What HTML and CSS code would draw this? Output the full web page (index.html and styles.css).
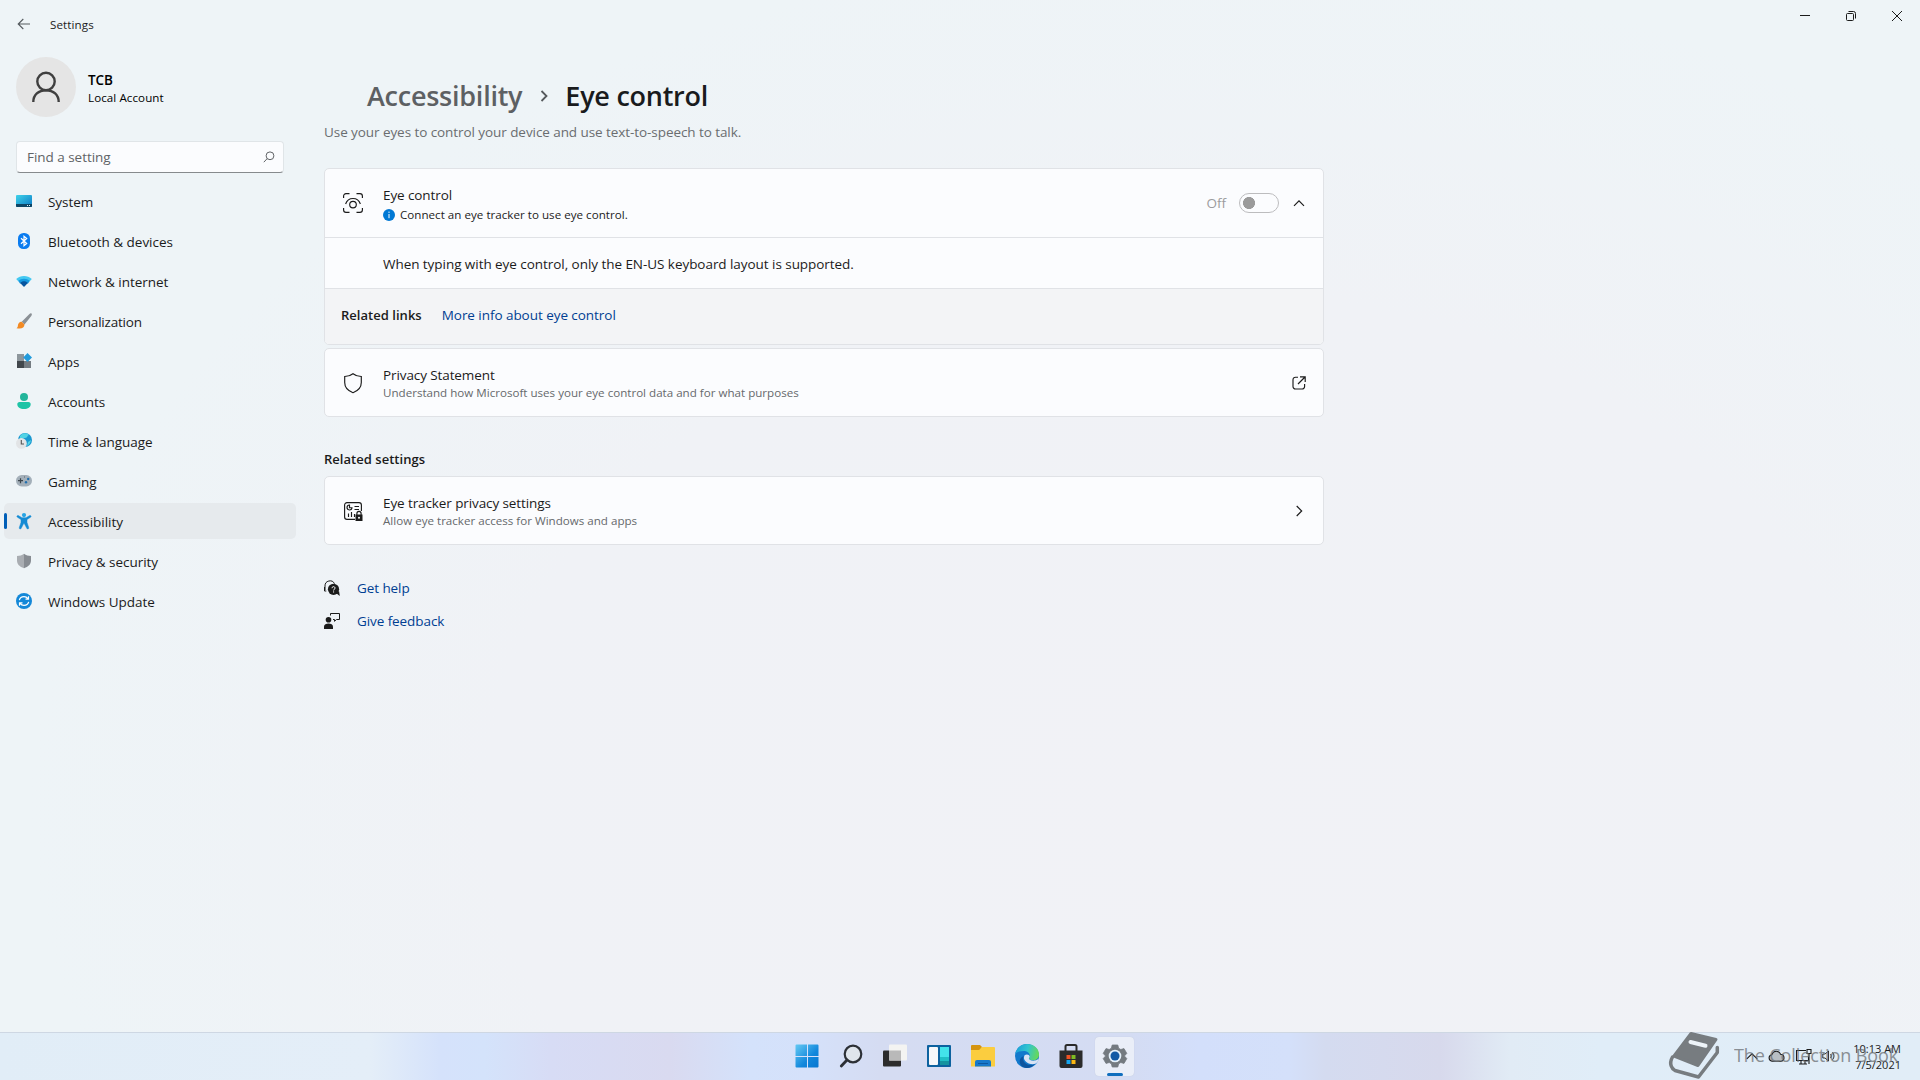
FILE: index.html
```html
<!DOCTYPE html>
<html lang="en">
<head>
<meta charset="utf-8">
<title>Settings</title>
<link rel="stylesheet" href="styles.css">
</head>
<body>
<div class="window">
  <header class="titlebar">
    <svg class="back" width="14" height="12" viewBox="0 0 14 12"><path d="M6.3 1 1.2 6l5.1 5M1.5 6H13"/></svg>
    <span class="app-name">Settings</span>
    <div class="controls">
      <svg width="12" height="12" viewBox="0 0 12 12"><path d="M1 5.5h10"/></svg>
      <svg width="12" height="12" viewBox="0 0 12 12"><rect x="1.5" y="3.5" width="7" height="7" rx="1"/><path d="M3.5 1.5h5a2 2 0 0 1 2 2v5"/></svg>
      <svg width="12" height="12" viewBox="0 0 12 12"><path d="m1 1 10 10M11 1 1 11"/></svg>
    </div>
  </header>

  <div class="columns">
    <aside class="sidebar">
      <div class="account">
        <div class="avatar"><svg width="30" height="32" viewBox="0 0 30 32"><circle cx="15" cy="10.5" r="8.7"/><path d="M2.3 31c0-7 5.2-11.8 12.7-11.8S27.700 24 27.700 31"/></svg></div>
        <div class="who"><span class="user">TCB</span><span class="kind">Local Account</span></div>
      </div>
      <div class="search">
        <span>Find a setting</span>
        <svg width="12" height="12" viewBox="0 0 12 12"><circle cx="7" cy="4.800" r="3.900"/><path d="M4.200 7.600.8 11.200"/></svg>
      </div>
      <nav class="nav">
        <a class="item"><svg width="16" height="16" viewBox="0 0 16 16"><defs><linearGradient id="sys" x1="0" y1="0" x2="1" y2="1"><stop offset="0" stop-color="#3fd3ea"/><stop offset="1" stop-color="#0a78c4"/></linearGradient></defs><rect y="2" width="16" height="12" rx="1" fill="url(#sys)"/><path d="M0 11h16v2a1 1 0 0 1-1 1H1a1 1 0 0 1-1-1z" fill="#0d4565"/><path d="M11 12.500h1m1 0h1" stroke="#d9f4fb"/></svg><span>System</span></a>
        <a class="item"><svg width="16" height="16" viewBox="0 0 16 16"><rect x="2" width="12" height="16" rx="5.500" fill="#0a7cf0"/><path d="m5 5.200 5.700 5.300L8 12.800V3.200l2.700 2.300L5 10.800" fill="none" stroke="#fff" stroke-width="1.200"/></svg><span>Bluetooth &amp; devices</span></a>
        <a class="item"><svg width="16" height="16" viewBox="0 0 16 16"><path d="M.2 6.100C4.300 2 11.700 2 15.800 6.100L14 8H2z" fill="#43c8f1"/><path d="M2.200 8c3-3.100 8.600-3.100 11.600 0L12 10.500H4z" fill="#1699e0"/><path d="M4.200 10c2-2.300 5.600-2.300 7.600 0L8.500 13.600a.7.7 0 0 1-1 0z" fill="#07559f"/></svg><span>Network &amp; internet</span></a>
        <a class="item tight"><svg width="16" height="16" viewBox="0 0 16 16"><path d="M15.500.5c.8.8.3 1.900-.4 2.800L8.500 11.500 5.700 8.800l7.500-7.500c.8-.8 1.600-1.400 2.300-.8z" fill="#8b9196"/><path d="M5.700 8.800 8.500 11.500c-.2 3.300-2.800 4.700-8 3.700 2-1.100.9-3.300 2.200-5 .8-1 2-1.400 3-1.400z" fill="#f28a24"/></svg><span>Personalization</span></a>
        <a class="item"><svg width="16" height="16" viewBox="0 0 16 16"><path d="M1 1h7v7H1z" fill="#8d969c"/><path d="M1 8h7v7H1z" fill="#41474c"/><path d="M8 8h7v7H8z" fill="#747c82"/><path d="m11.500 0 4.500 4.500L11.500 9 7.200 4.500z" fill="#229bdc"/></svg><span>Apps</span></a>
        <a class="item"><svg width="16" height="16" viewBox="0 0 16 16"><circle cx="8" cy="4" r="4" fill="#22b59b"/><path d="M1.300 11.200C1.300 10 2.200 9 3.500 9h9c1.300 0 2.200 1 2.200 2.200 0 3-2.700 4.800-6.700 4.800s-6.700-1.800-6.700-4.800z" fill="#1ec4a6"/></svg><span>Accounts</span></a>
        <a class="item"><svg width="16" height="16" viewBox="0 0 16 16"><circle cx="9" cy="7" r="7" fill="#1998d0"/><path d="M4 3c3-4 7-3 9-1-2 0-1 3-4 3S6 7 4 6zM12 9l3-2c-.3 3-2 5-4 6z" fill="#52d3e4"/><circle cx="5.400" cy="10.400" r="5.400" fill="#e2e4e6"/><path d="M5.300 7v4H8" fill="none" stroke="#555" stroke-width="1.100"/></svg><span>Time &amp; language</span></a>
        <a class="item"><svg width="16" height="16" viewBox="0 0 16 16"><rect y="2" width="16" height="11.500" rx="5.700" fill="#a3afb9"/><path d="M2 7.700h5M4.500 5.200v5" stroke="#3b454d" stroke-width="1.200"/><circle cx="12.200" cy="6" r="1.200" fill="#216fae"/><circle cx="10" cy="9.200" r="1.200" fill="#216fae"/><path d="M8 4h1" stroke="#54616b"/></svg><span>Gaming</span></a>
        <a class="item active"><svg width="16" height="16" viewBox="0 0 16 16"><circle cx="8" cy="2.100" r="2.100" fill="#27a4e4"/><path d="M2.300 2.600 6 4.700h4l3.700-2.100a.9.9 0 0 1 .9 1.600L11 6.600v2.800l1.700 5.200a1 1 0 0 1-1.900.7L8.300 10.500h-.6l-2.500 4.800a1 1 0 0 1-1.900-.7L5 9.400V6.600L1.400 4.200a.9.9 0 0 1 .9-1.600z" fill="#158bd4" stroke="#158bd4" stroke-width=".5"/></svg><span>Accessibility</span></a>
        <a class="item"><svg width="16" height="16" viewBox="0 0 16 16"><path d="M8 .8c2 1.500 4.300 2.100 7 2.200v4.500c0 3.700-2.600 6.200-7 7.700z" fill="#878c92"/><path d="M8 .8C6 2.300 3.700 2.900 1 3v4.500c0 3.700 2.600 6.200 7 7.700z" fill="#a9adb2"/></svg><span>Privacy &amp; security</span></a>
        <a class="item"><svg width="16" height="16" viewBox="0 0 16 16"><circle cx="8" cy="8" r="8" fill="#1488d8"/><path d="M3.300 7.200C3.900 4.900 5.700 3.700 8 3.700c1.700 0 3 .7 4 2M12.500 3.200v3h-3M12.700 8.800c-.6 2.300-2.400 3.500-4.700 3.500-1.700 0-3-.7-4-2M3.500 12.800v-3h3" fill="none" stroke="#fff" stroke-width="1.200"/></svg><span>Windows Update</span></a>
      </nav>
    </aside>

    <main class="content">
      <h1 class="crumbs"><span class="parent">Accessibility</span><svg width="8" height="12" viewBox="0 0 8 12"><path d="m1.500 1 5 5-5 5"/></svg><span>Eye control</span></h1>
      <p class="lead">Use your eyes to control your device and use text-to-speech to talk.</p>

      <section class="card expander">
        <div class="row head">
          <svg class="glyph" width="20" height="20" viewBox="0 0 20 20"><path d="M.6 5V3A2.400 2.400 0 0 1 3 .6h3.500M13.500.6H17A2.400 2.400 0 0 1 19.400 3v2M19.400 15v2a2.400 2.400 0 0 1-2.400 2.400h-3.500M6.500 19.400H3A2.400 2.400 0 0 1 .6 17v-2"/><path d="M2.600 11C4 7 7 5.500 10 5.500s6 1.500 7.400 5.500"/><circle cx="10" cy="11.600" r="3.300"/></svg>
          <div class="text"><span class="name">Eye control</span><span class="note"><svg width="12" height="12" viewBox="0 0 12 12"><circle cx="6" cy="6" r="6" fill="#0078d4"/><path d="M6 5v4.200M6 2.600v1.300" stroke="#fff"/></svg>Connect an eye tracker to use eye control.</span></div>
          <span class="state">Off</span><span class="toggle"></span>
          <svg class="tail" width="12" height="12" viewBox="0 0 12 12"><path d="m1 8.800 5-5 5 5"/></svg>
        </div>
        <div class="row info">When typing with eye control, only the EN-US keyboard layout is supported.</div>
        <div class="row links"><strong>Related links</strong><a>More info about eye control</a></div>
      </section>

      <section class="card row">
        <svg class="glyph" width="20" height="20" viewBox="0 0 20 20"><path d="M10 .7c2.300 1.800 5 2.700 8.300 2.800v6c0 5-3 8.200-8.300 10.200C4.700 17.700 1.700 14.500 1.700 9.500v-6C5 3.400 7.700 2.500 10 .7z"/></svg>
        <div class="text"><span class="name">Privacy Statement</span><span class="desc">Understand how Microsoft uses your eye control data and for what purposes</span></div>
        <svg class="tail" width="14" height="14" viewBox="0 0 14 14"><path d="M6 1.200H3.500A2.500 2.500 0 0 0 1 3.700v6.800A2.500 2.500 0 0 0 3.500 13h6.600a2.500 2.500 0 0 0 2.500-2.500V8M8 .8h5.200V6M13 1 6 8"/></svg>
      </section>

      <h2 class="heading">Related settings</h2>
      <section class="card row">
        <svg class="glyph" width="20" height="20" viewBox="0 0 20 20"><path d="M12 18.400H4A2.400 2.400 0 0 1 1.600 16V4A2.400 2.400 0 0 1 4 1.600h12A2.400 2.400 0 0 1 18.400 4v6M11.500 5.500h4.500M11.500 8.500h4.500M5.500 12.500v3.500M8.500 11v5M11.500 13v3"/><path d="M6.500 4A2.500 2.500 0 1 0 9 6.700H6.500z"/><path d="M12.500 13.500h7V20h-7z" fill="#1b1b1b" stroke="none"/><path d="M13.900 14v-1.500a2.100 2.100 0 0 1 4.200 0V14"/><circle cx="16" cy="16.800" r="1" fill="#fff" stroke="none"/></svg>
        <div class="text"><span class="name">Eye tracker privacy settings</span><span class="desc">Allow eye tracker access for Windows and apps</span></div>
        <svg class="tail" width="12" height="12" viewBox="0 0 12 12"><path d="m2.700 1 5 5-5 5"/></svg>
      </section>

      <div class="support">
        <a><svg width="16" height="16" viewBox="0 0 16 16"><path d="M1 10V6a5 5 0 0 1 9.500-2.300M.5 7v4h1.800" fill="none" stroke="#1b1b1b"/><circle cx="9.500" cy="9.300" r="5.600" fill="#1b1b1b"/><path d="m12 13 3.800 3-.8-5z" fill="#1b1b1b"/><path d="M8 8.200c0-2.200 3.200-2 3 0-.1 1-1.400 1.100-1.400 2.300m0 .9v1.100" fill="none" stroke="#fff"/></svg>Get help</a>
        <a><svg width="16" height="16" viewBox="0 0 16 16"><circle cx="4.500" cy="6.800" r="2.800" fill="#1b1b1b"/><path d="M0 16v-2.500c0-4 9-4 9 0V16z" fill="#1b1b1b"/><path d="M6.500 2.500v-2h9v6h-3L10.500 8.300V6.500H9" fill="none" stroke="#1b1b1b"/></svg>Give feedback</a>
      </div>
    </main>
  </div>

  <footer class="taskbar">
    <div class="apps">
      <span class="app"><svg width="24" height="24" viewBox="0 0 24 24"><defs><linearGradient id="win" x1="0" y1="0" x2="1" y2="1"><stop offset="0" stop-color="#64c9f3"/><stop offset=".6" stop-color="#1187dc"/><stop offset="1" stop-color="#0876d0"/></linearGradient></defs><path d="M1.500.5H12V12H.5V1.500a1 1 0 0 1 1-1zM13 .5h9.500a1 1 0 0 1 1 1V12H13zM.5 13H12v10.500H1.500a1 1 0 0 1-1-1zM13 13h10.500v9.500a1 1 0 0 1-1 1H13z" fill="url(#win)"/></svg></span>
      <span class="app"><svg width="24" height="24" viewBox="0 0 24 24"><circle cx="14" cy="10" r="8.300" fill="#dfe5ec" stroke="#2c3036" stroke-width="2.200"/><path d="m8 16-5.700 6" stroke="#2c3036" stroke-width="2.800" stroke-linecap="round"/></svg></span>
      <span class="app"><svg width="24" height="24" viewBox="0 0 24 24"><rect y="6.500" width="18" height="16" rx="1" fill="#2c2c2c"/><rect x="6" y=".5" width="18" height="16" rx="1" fill="#f4f4f2"/><path d="M6 6.500h12v10H6z" fill="#b9b9b9"/></svg></span>
      <span class="app"><svg width="24" height="24" viewBox="0 0 24 24"><rect y="1" width="24" height="22" rx="1" fill="#0d629f"/><rect x="2" y="3" width="9" height="18" rx="1" fill="#f6f8fa"/><path d="M13 3h9v10h-9z" fill="#43e3ea"/><path d="M13 13h9v4h-9z" fill="#20bfc5"/><path d="M13 17h9v4h-9z" fill="#15939f"/></svg></span>
      <span class="app"><svg width="24" height="24" viewBox="0 0 24 24"><path d="M0 2a1 1 0 0 1 1-1h8l2 2-2 4H0z" fill="#d59410"/><path d="M0 6h8l3-3h12a1 1 0 0 1 1 1v18.500H0z" fill="#fbcd3f"/><path d="M4 22.500V18a2 2 0 0 1 2-2h12a2 2 0 0 1 2 2v4.500z" fill="#1679cb"/><path d="M7 19h10v1H7z" fill="#0c58a0"/></svg></span>
      <span class="app"><svg width="24" height="24" viewBox="0 0 24 24"><defs><linearGradient id="edge" x1="0" y1=".3" x2="1" y2=".5"><stop offset="0" stop-color="#1a9fd9"/><stop offset=".5" stop-color="#31c5cf"/><stop offset="1" stop-color="#68d957"/></linearGradient></defs><circle cx="12" cy="12" r="12" fill="#1279cc"/><path d="M.3 10C1.500 3.700 6.300 0 12 0c6.800 0 12 4.800 12 10.300 0 4-2.700 6-6 6-2.600 0-4-1-4-2 0-.7.800-1.100.8-2.600C14.800 9 12 7 8.500 7 4.800 7 2 8 .3 10z" fill="url(#edge)"/><path d="M8.500 12c-2 6 3.500 11 11.500 8-3 3.300-6.500 4.500-10 3.700C4 22.300 2.500 14.500 8.500 12z" fill="#0d559f"/><path d="M9.600 11.200c1.500-1.400 5-1 5.100 1.200 0 1-.8 1.300-.8 2 0 1.300 2.600 2.700 6 2.200 1.600-.2 2.900-1.100 3.600-2 .300 2-1 4.300-3.100 5.200-6.600 1.700-13.800-3.500-10.800-8.600z" fill="#d9e3f4"/></svg></span>
      <span class="app"><svg width="24" height="24" viewBox="0 0 24 24"><path d="M6.500 7V2.500a1.500 1.500 0 0 1 1.500-1.500h8a1.500 1.500 0 0 1 1.500 1.500V7" fill="none" stroke="#292929" stroke-width="2"/><path d="M.5 6.500h23V22a2 2 0 0 1-2 2h-19a2 2 0 0 1-2-2z" fill="#2b2b2b"/><path d="M7.500 11h4v4h-4z" fill="#f05223"/><path d="M12.500 11h4v4h-4z" fill="#7fbb22"/><path d="M7.500 16h4v4h-4z" fill="#16a4ec"/><path d="M12.500 16h4v4h-4z" fill="#fcb914"/></svg></span>
      <span class="app open"><svg width="24" height="24" viewBox="0 0 24 24"><path d="M9.200 1h5.600l.8 3.200 2.200 1.300L21 4.600l2.800 4.800-2.400 2.600 2.400 2.600-2.800 4.800-3.200-.9-2.200 1.300-.8 3.200H9.200l-.8-3.200-2.200-1.300-3.200.9L.2 14.600 2.600 12 .2 9.400 3 4.600l3.200.9 2.200-1.300z" fill="#747a80" stroke="#747a80" stroke-linejoin="round" stroke-width=".8"/><circle cx="12" cy="12" r="6.300" fill="#e5f1fb"/><circle cx="12" cy="12" r="4.500" fill="#1159a5"/></svg></span>
    </div>
    <div class="tray">
      <svg width="12" height="8" viewBox="0 0 12 8"><path d="m.8 6.800 5.200-5 5.200 5"/></svg>
      <svg width="17" height="12" viewBox="0 0 17 12"><path d="M4 11.200a3.300 3.300 0 0 1-.3-6.500C5.500.2 11 .2 12.500 4.200c4.500.2 4.700 7 .3 7z" fill="#b8bec3"/></svg>
      <svg width="17" height="17" viewBox="0 0 17 17"><path d="M11 2.500H1.500v10h12V8M4 16h8M6 12.500V16M10 12.500V16M12 1.500h4v4h-4zM14 5.500V16"/></svg>
      <svg class="thin" width="14" height="12" viewBox="0 0 14 12"><path d="M.8 4v4H3l3.500 3V1L3 4zM8.500 4c1 1.200 1 2.800 0 4M10.500 2.200c2 2.400 2 5.200 0 7.600"/></svg>
      <div class="clock"><span>10:13 AM</span><span>7/5/2021</span></div>
    </div>
    <div class="watermark">
      <svg width="51" height="48" viewBox="0 0 51 48"><path d="M22 1.500 47 7.500 29 33.500 5 24z" fill="#777c80" stroke="#777c80" stroke-width="3" stroke-linejoin="round"/><path d="m21.500 10 15 3.700" stroke="#edf3f8" stroke-width="4" stroke-linecap="round"/><path d="M3.500 25C-.500 32 3 37 6 38.500L29.500 45 48.300 20.500v-5" fill="none" stroke="#777c80" stroke-width="3.500" stroke-linejoin="round" stroke-linecap="round"/></svg>
      <span>The Collection Book</span>
    </div>
  </footer>
</div>
</body>
</html>
```
FILE: styles.css
```css
* { box-sizing: border-box; }

body {
  margin: 0;
  font: 13.5px/20px "Open Sans", "Noto Sans", sans-serif;
  letter-spacing: -0.03px;
  color: #1b1b1b;
}

svg { display: block; flex: none; overflow: visible; }

.window {
  display: flex;
  flex-direction: column;
  width: 1920px;
  height: 1080px;
  overflow: hidden;
  background: radial-gradient(ellipse 1150px 850px at 1180px 800px, #f1f2f6 0%, #f0f2f6 60%, #eef4f7 100%);
}

.titlebar { display: flex; height: 48px; padding-left: 17px; }
.back { margin-top: 18px; fill: none; stroke: #555a5e; stroke-width: 1.1; }
.app-name { margin: 15px 0 0 19px; font-size: 11.6px; letter-spacing: 0.1px; }
.controls { display: flex; gap: 34px; margin: 10px 17px 0 auto; fill: none; stroke: #1b1b1b; }

.columns { display: flex; flex: 1; }

.sidebar { width: 300px; padding: 9px 4px 0; }
.account { display: flex; align-items: center; gap: 12px; padding-left: 12px; color: #000; }
.avatar { display: flex; align-items: center; justify-content: center; width: 60px; height: 60px; border-radius: 50%; background: #e5e5e5; }
.avatar svg { fill: none; stroke: #3f3f3f; stroke-width: 2.4; }
.who { display: flex; flex-direction: column; padding-top: 3px; line-height: 18px; }
.user { font-size: 13.5px; font-weight: 600; }
.kind { font-size: 11.6px; letter-spacing: 0.08px; }

.search {
  display: flex;
  align-items: center;
  justify-content: space-between;
  width: 268px;
  height: 32px;
  margin: 24px 0 0 12px;
  padding: 0 8px 1px 10px;
  border: 1px solid #e0e5e8;
  border-bottom-color: #868a8d;
  border-radius: 4px;
  background: #fbfcfe;
  color: #606366;
}
.search svg { fill: none; stroke: #606366; }

.nav { display: flex; flex-direction: column; gap: 4px; margin-top: 10px; }
.item { position: relative; display: flex; align-items: center; gap: 16px; width: 292px; height: 36px; padding-left: 12px; border-radius: 5px; }
.item span { padding-top: 2px; }
.tight { letter-spacing: -0.2px; }
.active { background: #e6eaed; }
.active::before { content: ""; position: absolute; left: 0; top: 10px; width: 3px; height: 16px; border-radius: 2px; background: #005fb8; }

.content { width: 1000px; margin-left: 24px; }
.crumbs { display: flex; align-items: center; margin: 29px 0 0 43px; font-size: 27px; line-height: 38px; font-weight: 600; letter-spacing: -0.25px; color: #191b1d; }
.crumbs svg { margin: 0 17px 0 18px; fill: none; stroke: #55595c; stroke-width: 1.8; }
.parent { color: #5d6063; }
.lead { margin: 7px 0 26px; color: #6a6d70; letter-spacing: -0.07px; }

.card { border: 1px solid #e0e2e6; border-radius: 5px; background: #fbfcfe; }
.row { display: flex; align-items: center; }
.card.row { height: 69px; padding: 0 17px 0 18px; }
.expander { height: 177px; margin-bottom: 3px; overflow: hidden; }
.head { height: 69px; padding: 0 18px; border-bottom: 1px solid #e0e2e6; }
.glyph { margin-right: 20px; fill: none; stroke: #1b1b1b; stroke-width: 1.15; }
.text { display: flex; flex: 1; flex-direction: column; padding-top: 2px; line-height: 18px; }
.head .text { padding-top: 3px; line-height: 20px; }
.note { display: flex; align-items: center; gap: 5px; font-size: 11.6px; letter-spacing: 0.02px; }
.desc { font-size: 11.6px; letter-spacing: 0; color: #66696c; }
.tail { fill: none; stroke: #1b1b1b; stroke-width: 1.15; }
.name { letter-spacing: -0.1px; }
.state { color: #9b9b9d; }
.toggle { width: 40px; height: 20px; margin: 0 14px 0 13px; border: 1px solid #bcbcbe; border-radius: 10px; background: radial-gradient(circle at 9px 9px, #9b9b9b 5.7px, transparent 6.300px); }
.info { height: 51px; padding: 1px 0 0 58px; border-bottom: 1px solid #e0e2e6; letter-spacing: -0.05px; }
.links { height: 56px; gap: 20px; padding: 0 16px 4px; background: #f3f4f6; }
.links strong, .heading { font-size: 13px; font-weight: 600; letter-spacing: 0.03px; }
.links a { letter-spacing: -0.05px; }
.links a, .support { color: #003e92; }
.heading { margin: 32px 0 7px; line-height: 20px; }

.support { display: flex; flex-direction: column; gap: 13px; margin-top: 33px; letter-spacing: -0.08px; }
.support a { display: flex; align-items: center; gap: 17px; }

.taskbar {
  position: relative;
  height: 48px;
  border-top: 1px solid #ced7e3;
  background: linear-gradient(90deg, #e1edf7 0, #e4eef8 370px, #d5e2fb 440px, #d4e3fb 485px, #d7dcf5 550px, #d9daf0 670px, #d4e2fb 750px, #d5e1fa 810px, #d5dcf2 880px, #d4dcf3 1130px, #d3dffb 1200px, #d4e0fa 1290px, #d4dbf0 1325px, #d7d9ec 1440px, #e1ebf5 1510px, #e0edf8 1600px, #e1edf7 1920px);
}
.apps { display: flex; gap: 5px; justify-content: center; padding: 4px 0 0 1px; }
.app { position: relative; display: flex; align-items: center; justify-content: center; width: 39px; height: 39px; border-radius: 4px; }
.app svg { margin-bottom: 1px; }
.open { background: #eaeef8; box-shadow: 0 0 1px #b9c1d3; }
.open::after { content: ""; position: absolute; bottom: 0; left: 12px; width: 16px; height: 3px; border-radius: 2px; background: #106ebe; }

.tray { position: absolute; right: 19px; top: 0; display: flex; align-items: center; height: 46px; fill: none; stroke: #1b1b1b; stroke-width: 1.1; }
.tray svg { margin-right: 10px; }
.tray .thin { margin-right: 9px; stroke-width: 0.9; }
.clock { display: flex; flex-direction: column; align-items: flex-end; width: 52px; margin-left: 4px; padding-top: 1px; font-size: 11px; line-height: 16px; letter-spacing: 0; white-space: nowrap; }

.watermark { position: absolute; left: 1669px; top: -1px; display: flex; align-items: center; height: 48px; gap: 14px; font-size: 18px; letter-spacing: -0.1px; color: #6b6f73; }
.watermark span { padding-bottom: 3px; opacity: 0.75; }
```
